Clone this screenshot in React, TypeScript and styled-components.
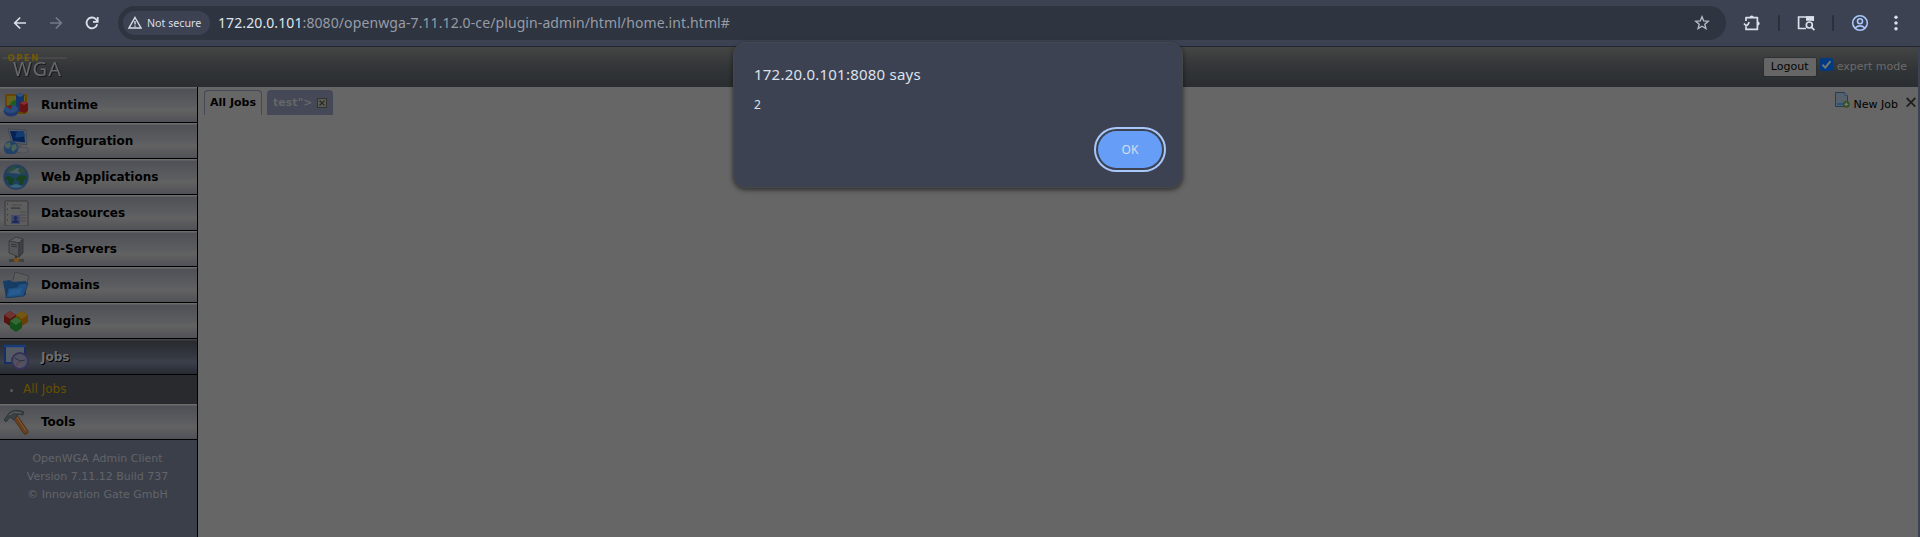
import React from 'react';
import styled, { createGlobalStyle, css } from 'styled-components';

const GlobalStyle = createGlobalStyle`
  * { box-sizing: border-box; }
  body { margin: 0; background: #3c4252; overflow: hidden; }
`;

const ui = `'Noto Sans', 'Open Sans', sans-serif`;
const page = `'DejaVu Sans', Verdana, sans-serif`;

const Window = styled.div`
  position: relative;
  width: 1920px;
  height: 537px;
  display: flex;
  flex-direction: column;
  background: #3c4252;
  font-family: ${page};
  font-size: 11px;
`;
const Toolbar = styled.div`
  height: 47px;
  flex: none;
  display: flex;
  align-items: center;
  padding: 0 8px 1px 8px;
  border-bottom: 1px solid #22262f;
  font-family: ${ui};
`;
const ToolButton = styled.span<{ $w: number; $color?: string }>`
  width: ${(p) => p.$w}px;
  height: 24px;
  flex: none;
  display: flex;
  align-items: center;
  justify-content: center;
  color: ${(p) => p.$color || '#dbe0ea'};
`;
const AddressBar = styled.div`
  width: 1608px;
  height: 34px;
  flex: none;
  margin-left: 14px;
  border-radius: 17px;
  background: #2e3440;
  display: flex;
  align-items: center;
  padding: 0 15px 0 5px;
`;
const SecurityChip = styled.span`
  width: 87px;
  height: 24px;
  border-radius: 12px;
  background: #3c4252;
  color: #d8dee9;
  display: flex;
  align-items: center;
  gap: 5px;
  padding-left: 5px;
  font-size: 10.7px;
  white-space: nowrap;
`;
const Url = styled.span`
  flex: 1;
  margin-left: 8px;
  font-size: 14px;
  letter-spacing: 0.1px;
  color: #979ca6;
  b { font-weight: 400; color: #dfe4ee; }
`;
const Divider = styled.i`
  width: 2px;
  height: 16px;
  flex: none;
  border-radius: 1px;
  background: #2b303b;
`;
const AppHeader = styled.div`
  height: 40px;
  flex: none;
  margin-right: 2px;
  display: flex;
  align-items: center;
  justify-content: space-between;
  padding-right: 11px;
  background: linear-gradient(#454545 0%, #3a3c3d 28%, #323537 55%, #2a2e30 100%);
`;
const HeaderTools = styled.div`
  display: flex;
  align-items: center;
  padding-bottom: 1px;
  color: #6b6b6b;
`;
const Logout = styled.span`
  width: 52px;
  height: 18px;
  background: #666;
  border-radius: 1px;
  box-shadow: 0 0 0 0.5px #262829;
  color: #050505;
  line-height: 18px;
  text-align: center;
`;
const Check = styled.span`
  width: 13px;
  height: 13px;
  margin: -5px 4px 0 4px;
  border-radius: 2px;
  background: #003a80;
  display: flex;
`;
const Body = styled.div`
  flex: 1;
  display: flex;
  margin-right: 2px;
`;
const Sidebar = styled.div`
  width: 198px;
  border-right: 1px solid #000;
  background: #3b3f49;
  display: flex;
  flex-direction: column;
`;
const NavRow = styled.div<{ $active?: boolean }>`
  height: 36px;
  display: flex;
  align-items: center;
  padding-left: 3px;
  gap: 12px;
  border-bottom: 1px solid #000;
  font-size: 12px;
  font-weight: 700;
  color: #000;
  background: linear-gradient(#6c6c6c 0 1px, #505157 2px, #5b5c5f 50%, #626262 65%, #505157 100%);
  ${(p) =>
    p.$active &&
    css`
      color: #6e6e6e;
      text-shadow: 1px 1px 0 #000;
      background: linear-gradient(#424347 0 1px, #282a2e 2px, #343841 50%, #3b404b 65%, #272a30 100%);
    `}
`;
const NavIcon = styled.span`
  width: 26px;
  height: 26px;
  svg { display: block; }
`;
const SubRow = styled.div`
  height: 29px;
  display: flex;
  align-items: center;
  padding: 0 0 2px 10px;
  gap: 10px;
  font-size: 12px;
  color: #665000;
  background: #292a2d;
`;
const Bullet = styled.i`
  width: 3px;
  height: 3px;
  margin-top: 4px;
  border-radius: 50%;
  background: #5a5a5a;
`;
const About = styled.div`
  padding-top: 10px;
  padding-right: 2px;
  text-align: center;
  line-height: 18px;
  color: #626469;
`;
const Content = styled.div`
  flex: 1;
  display: flex;
  justify-content: space-between;
  align-items: flex-start;
  padding: 3px 2px 0 6px;
  background: #666;
`;
const Tabs = styled.div`
  display: flex;
  gap: 5px;
`;
const Tab = styled.div<{ $active?: boolean }>`
  width: ${(p) => (p.$active ? 58 : 66)}px;
  height: 25px;
  display: flex;
  align-items: center;
  gap: 5px;
  padding-left: 5px;
  padding-bottom: 1px;
  border: 1px solid #444857;
  border-bottom: 0;
  border-radius: 4px 4px 0 0;
  background: ${(p) => (p.$active ? '#666' : '#444857')};
  color: ${(p) => (p.$active ? '#000' : '#666')};
  font-weight: 700;
  white-space: nowrap;
`;
const Actions = styled.div`
  display: flex;
  align-items: flex-start;
  color: #000;
  svg { display: block; }
`;
const ActionLabel = styled.span`
  margin: 8px 8px 0 4px;
  line-height: 13px;
`;
const Alert = styled.div`
  position: absolute;
  left: 733px;
  top: 42px;
  width: 450px;
  height: 146px;
  display: flex;
  flex-direction: column;
  padding: 21px 21px 0 20px;
  border: 1px solid #454749;
  border-top-color: #44484d;
  border-radius: 13px;
  background: #3c4252;
  box-shadow: 0 2px 5px rgba(0, 0, 0, 0.55);
  font-family: ${ui};
  color: #dce1eb;
`;
const AlertTitle = styled.div`
  font-size: 15px;
  letter-spacing: 0.22px;
  line-height: 20px;
`;
const AlertText = styled.div`
  margin-top: 13px;
  font-size: 12px;
  line-height: 16px;
`;
const OkButton = styled.button`
  align-self: flex-end;
  width: 64px;
  height: 37px;
  margin: 18px -1px 0 0;
  padding: 0;
  border: 0;
  border-radius: 19px;
  background: #669df6;
  outline: 2px solid #a8c7fa;
  outline-offset: 2px;
  color: #d4dff2;
  font: 12px ${ui};
`;

const BackIcon = ({ flip }: { flip?: boolean }) => (
  <svg width="14" height="14" viewBox="0 0 14 14" fill="none" stroke="currentColor" strokeWidth="1.7" transform={flip ? 'scale(-1 1)' : undefined}>
    <path d="M13 7H2M7.2 1.5 1.7 7l5.5 5.5" />
  </svg>
);
const ReloadIcon = () => (
  <svg width="14" height="14" viewBox="0 0 14 14" fill="none" stroke="currentColor" strokeWidth="1.8">
    <path d="M12.2 8.2A5.4 5.4 0 1 1 10.8 3.1L12.4 5" />
    <path d="M12.7 1v4.8H8" />
  </svg>
);
const WarningIcon = () => (
  <svg width="14" height="13" viewBox="0 0 14 13" fill="none" stroke="currentColor" strokeWidth="1.4">
    <path d="M7 1.5 13 12H1ZM7 5v3.5M7 9.4v1.4" />
  </svg>
);
const StarIcon = () => (
  <svg width="16" height="16" viewBox="0 0 16 16" fill="none" stroke="currentColor" strokeWidth="1.4">
    <path d="m8 1.8 1.7 4.1 4.5.4-3.4 2.9 1.1 4.4L8 11.2l-3.9 2.4 1.1-4.4-3.4-2.9 4.5-.4Z" />
  </svg>
);
const PuzzleIcon = () => (
  <svg width="18" height="18" viewBox="0 0 18 18" fill="none" stroke="currentColor" strokeWidth="1.7" strokeLinejoin="round">
    <path d="M3 7V3.6h11.4v11.8H3v-3.2" />
    <path d="M1 9.6q2 2.6 3.4 1.4T6 8" />
    <path d="M6.6 3.6a2.1 2.1 0 0 1 4.2 0ZM14.6 7.4a2.1 2.1 0 0 1 0 4.2Z" fill="currentColor" stroke="none" />
  </svg>
);
const LensIcon = () => (
  <svg width="18" height="16" viewBox="0 0 18 16" fill="none" stroke="currentColor" strokeWidth="1.7">
    <path d="M9 13.5H1.6V2h14.6v4" />
    <path d="M9 1.3h8v4.5H9Z" fill="currentColor" stroke="none" />
    <circle cx="12.3" cy="10" r="3" />
    <path d="m14.4 12.2 3 3" />
  </svg>
);
const ProfileIcon = () => (
  <svg width="18" height="18" viewBox="0 0 18 18" fill="none" stroke="#a8c7fa" strokeWidth="1.6">
    <circle cx="9" cy="9" r="7.3" />
    <circle cx="9" cy="7.2" r="2.5" />
    <path d="M4 14q5-4.4 10 0" />
  </svg>
);
const DotsIcon = () => (
  <svg width="4" height="16" viewBox="0 0 4 16" fill="currentColor">
    <circle cx="2" cy="2.3" r="1.7" /><circle cx="2" cy="8" r="1.7" /><circle cx="2" cy="13.7" r="1.7" />
  </svg>
);

const LogoSvg = styled.svg`
  .wga { filter: drop-shadow(1px 1px 0.6px #18191a); }
`;
const Logo = () => (
  <LogoSvg width="70" height="40" viewBox="0 0 70 40">
    <path d="M2 11h65" stroke="#48484a" strokeWidth="2" />
    <text className="wga" x="13" y="29.3" fontFamily="Noto Sans" fontSize="20" fill="#666869" textLength="48">WGA</text>
    <text x="7.5" y="14" fontFamily="DejaVu Sans" fontWeight="700" fontSize="8.2" fill="#755a08" textLength="30.5">OPEN</text>
  </LogoSvg>
);

const Svg = ({ children }: { children: React.ReactNode }) => (
  <svg width="26" height="26" viewBox="0 0 26 26">{children}</svg>
);

const icons: Record<string, React.ReactNode> = {
  Runtime: (
    <Svg>
      <rect x="2" y="2" width="22" height="20" rx="2" fill="#654500" />
      <rect x="4" y="4" width="18" height="15" fill="#68601d" />
      <path d="M7 15a6 6 0 0 1 6-7v8Z" fill="#1c5e20" />
      <path d="m13 3 4-2 4 2v15l-4 2-4-2Z" fill="#14366a" />
      <path d="m13 3 4-2 4 2-4 2Z" fill="#2d5680" />
      <path d="m17 11 4-2 4 2v8l-4 2-4-2Z" fill="#671113" />
      <path d="m17 11 4-2 4 2-4 2Z" fill="#873033" />
      <ellipse cx="8" cy="19" rx="7.5" ry="5.5" fill="#20386d" />
      <ellipse cx="8" cy="17" rx="7" ry="4" fill="#2c4b7b" />
      <path d="M8 17 3 14.5Q6 13 9 13Z" fill="#691d13" />
    </Svg>
  ),
  Configuration: (
    <Svg>
      <path d="m5 1 18 1 1 15-15-2Z" fill="#535a64" stroke="#333c4c" strokeWidth=".6" />
      <path d="m7 3 14 .5 1 11-12-1.5Z" fill="#032257" />
      <path d="m14 3.3 7 .2.5 5L12 10Z" fill="#123b72" />
      <path d="m15 16 4 1-1 4h-4Z" fill="#50545d" />
      <ellipse cx="19" cy="22" rx="7" ry="3" fill="#5b5d63" stroke="#41454d" strokeWidth=".6" />
      <circle cx="8" cy="20" r="7" fill="#20426a" stroke="#34445d" />
      <path d="m2 16 5-2 1 4-3 3-3-2Zm7 1 4-1 1 4-4 4-2-3Z" fill="#496158" />
    </Svg>
  ),
  'Web Applications': (
    <Svg>
      <circle cx="13" cy="13" r="12" fill="#20405f" stroke="#2b3e60" strokeWidth="1.5" />
      <path d="M4 8q9-8 18 0l-5 2-9-1Z" fill="#4b5c66" />
      <path d="M5 6q4-4 9-4l-1 3-4 2-5 2ZM17 3q4 1 6 5l-5 2-3-3Z" fill="#2a4c38" />
      <path d="m2 13 4-1 4 2 2 2-2 2-1 4-3-2-1-4-3-1Z" fill="#174220" />
      <path d="m14 13 5-2 4 1 1 3-3 1-1 4-3 2-1-5-3-1Z" fill="#174220" />
      <path d="M6 22q7 4 14 0l-7-2Z" fill="#36627c" />
    </Svg>
  ),
  Datasources: (
    <Svg>
      <rect x="2" y="1" width="23" height="25" rx="1" fill="#5e5e5f" stroke="#39393a" />
      <path d="M4.5 3v21" stroke="#3c3c3c" strokeDasharray="1.5 4" />
      <path d="M9 5h10M8 8.5h10M17 12h6M17 15h6M17 18h6M17 21h6" stroke="#48484a" strokeWidth=".8" />
      <path d="M8 8h9" stroke="#333" />
      <rect x="8" y="15" width="9" height="9" fill="#434a70" />
      <circle cx="12.5" cy="18" r="2" fill="#222b55" />
      <path d="M9 23q0-3 3.5-3t3.5 3Z" fill="#222b55" />
    </Svg>
  ),
  'DB-Servers': (
    <Svg>
      <path d="m6 5 7-4 7 2-4 4Z" fill="#606062" stroke="#343537" strokeWidth=".8" />
      <path d="m6 5 10 2v14L6 17Z" fill="#55565a" stroke="#353639" strokeWidth=".8" />
      <path d="m16 7 4-4v14l-4 4Z" fill="#404145" stroke="#303135" strokeWidth=".8" />
      <path d="m8 8 6 1M8 10l6 1" stroke="#333" />
      <path d="M13 20v4" stroke="#303136" strokeWidth="2" />
      <path d="M6 24.5h15" stroke="#3f4044" strokeWidth="3" />
      <rect x="11" y="22" width="5" height="4" rx="1" fill="#78501a" />
    </Svg>
  ),
  Domains: (
    <Svg>
      <path d="m12 0 14 4-5 16L8 17Z" fill="#5b5c5e" stroke="#3c3e42" strokeWidth=".8" />
      <path d="m0 9 7-1 2 2 14-1v14L3 26Z" fill="#173d64" />
      <path d="m3 26 2-10 9-1 2-3 9-1-4 13Z" fill="#214f80" stroke="#143860" strokeWidth=".8" />
      <path d="m7 18 12-2-2 6-12 2Z" fill="#285b8f" />
    </Svg>
  ),
  Plugins: (
    <Svg>
      <path d="m1 7 6-4 6 4v7l-6 4-6-4Z" fill="#561211" /><path d="m1 7 6-4 6 4-6 4Z" fill="#713431" />
      <path d="m13 7 6-4 6 4v7l-6 4-6-4Z" fill="#694000" /><path d="m13 7 6-4 6 4-6 4Z" fill="#755713" />
      <path d="m7 13 6-4 6 4v7l-6 4-6-4Z" fill="#14501a" /><path d="m7 13 6-4 6 4-6 4Z" fill="#346a32" />
    </Svg>
  ),
  Jobs: (
    <Svg>
      <rect x="2" y="2" width="20" height="17" fill="#555b65" stroke="#142f64" strokeWidth="2" />
      <path d="M1 2h22" stroke="#183c77" strokeWidth="2.5" />
      <circle cx="17" cy="17" r="8" fill="#515164" stroke="#383158" strokeWidth="2" />
      <path d="m12 14 5 3 5-1" fill="none" stroke="#2d2d3a" />
      <path d="m17 17-4 4" stroke="#6b2d2e" />
    </Svg>
  ),
  Tools: (
    <Svg>
      <path d="m10 9 4-3 11 16q0 4-4 3Z" fill="#66401e" stroke="#45301e" strokeWidth=".8" />
      <path d="m14 8 9 14" stroke="#83592e" />
      <path d="m1 11 5-7q6-5 15-1l-1 3-5-1-4 6-4-3-4 5Z" fill="#3c4143" stroke="#2b3032" strokeWidth=".8" />
      <path d="m6 6 5-3 7 1" fill="none" stroke="#5d6264" />
    </Svg>
  ),
};

const Item = ({ name, active }: { name: string; active?: boolean }) => (
  <NavRow $active={active}>
    <NavIcon>{icons[name]}</NavIcon>
    {name}
  </NavRow>
);

export default function App() {
  return (
    <>
      <GlobalStyle />
      <Window>
        <Toolbar>
          <ToolButton $w={24}><BackIcon /></ToolButton>
          <ToolButton $w={48} $color="#747a87"><BackIcon flip /></ToolButton>
          <ToolButton $w={24}><ReloadIcon /></ToolButton>
          <AddressBar>
            <SecurityChip><WarningIcon />Not secure</SecurityChip>
            <Url><b>172.20.0.101</b>:8080/openwga-7.11.12.0-ce/plugin-admin/html/home.int.html#</Url>
            <ToolButton $w={18} $color="#b6bbc5"><StarIcon /></ToolButton>
          </AddressBar>
          <ToolButton $w={52}><PuzzleIcon /></ToolButton>
          <Divider />
          <ToolButton $w={52}><LensIcon /></ToolButton>
          <Divider />
          <ToolButton $w={52}><ProfileIcon /></ToolButton>
          <ToolButton $w={20}><DotsIcon /></ToolButton>
        </Toolbar>
        <AppHeader>
          <Logo />
          <HeaderTools>
            <Logout>Logout</Logout>
            <Check>
              <svg width="13" height="13" viewBox="0 0 13 13" fill="none" stroke="#777" strokeWidth="2">
                <path d="m2.5 6.8 2.8 2.8 5.2-6.5" />
              </svg>
            </Check>
            expert mode
          </HeaderTools>
        </AppHeader>
        <Body>
          <Sidebar>
            {['Runtime', 'Configuration', 'Web Applications', 'Datasources', 'DB-Servers', 'Domains', 'Plugins'].map((n) => (
              <Item key={n} name={n} />
            ))}
            <Item name="Jobs" active />
            <SubRow><Bullet />All Jobs</SubRow>
            <Item name="Tools" />
            <About>OpenWGA Admin Client<br />Version 7.11.12 Build 737<br />© Innovation Gate GmbH</About>
          </Sidebar>
          <Content>
            <Tabs>
              <Tab $active>All Jobs</Tab>
              <Tab>
                test"&gt;
                <svg width="10" height="10" viewBox="0 0 10 10" fill="none" stroke="#272822">
                  <rect x=".5" y=".5" width="9" height="9" fill="#5c5d57" stroke="#32332e" />
                  <path d="m2.5 2.5 5 5m0-5-5 5" strokeWidth="1.1" />
                </svg>
              </Tab>
            </Tabs>
            <Actions>
              <svg width="16" height="18" viewBox="0 0 16 18">
                <path d="M1.5 2.5h9l3 3v11h-12Z" fill="#56616b" stroke="#243d57" />
                <path d="M10.5 2.5v3h3" fill="#65696c" stroke="#38516a" />
                <path d="M3 13h6v2H3Z" fill="#28557e" />
                <circle cx="12.3" cy="14.3" r="3.4" fill="#32501a" />
                <path d="M12.3 12.3v4m-2-2h4" stroke="#777" strokeWidth="1.2" />
              </svg>
              <ActionLabel>New Job</ActionLabel>
              <svg width="10" height="22" viewBox="0 0 10 22" fill="none" stroke="#20211a" strokeWidth="1.8">
                <path d="m.7 8 8.6 8.6m0-8.6L.7 16.6" />
              </svg>
            </Actions>
          </Content>
        </Body>
        <Alert>
          <AlertTitle>172.20.0.101:8080 says</AlertTitle>
          <AlertText>2</AlertText>
          <OkButton>OK</OkButton>
        </Alert>
      </Window>
    </>
  );
}
